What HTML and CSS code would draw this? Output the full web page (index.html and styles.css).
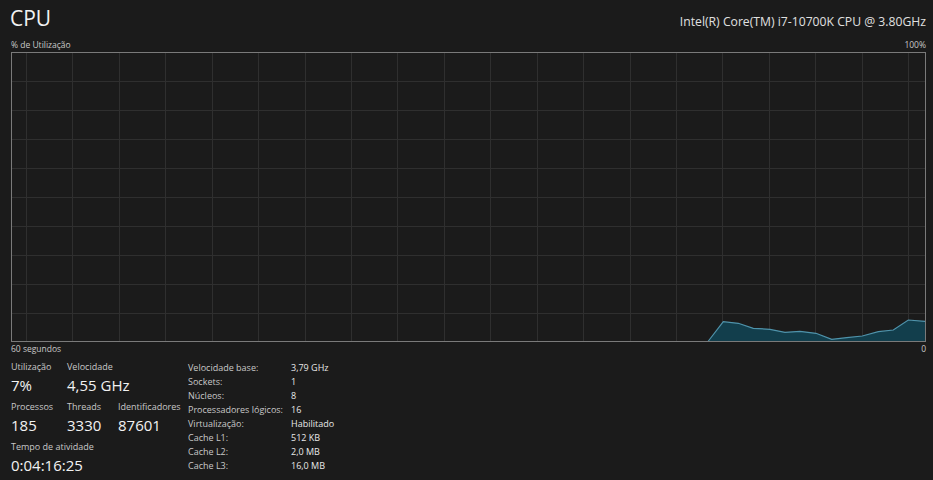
FILE: index.html
```html
<!DOCTYPE html>
<html lang="pt">
<head>
  <meta charset="UTF-8" />
  <title>CPU</title>
  <link rel="stylesheet" href="styles.css">
</head>
<body>
  <div id="cpu-panel">
    <div class="header">
      <h1>CPU</h1>
      <div class="model">Intel(R) Core(TM) i7-10700K CPU @ 3.80GHz</div>
    </div>
    <div class="axis-row top">
      <span>% de Utilização</span>
      <span>100%</span>
    </div>

    <svg class="graph" width="915" height="290" viewBox="0 0 915 290">
      <g class="grid">
        <line x1="0" y1="29.5" x2="915" y2="29.5"/>
        <line x1="0" y1="58.5" x2="915" y2="58.5"/>
        <line x1="0" y1="87.5" x2="915" y2="87.5"/>
        <line x1="0" y1="116.5" x2="915" y2="116.5"/>
        <line x1="0" y1="145.5" x2="915" y2="145.5"/>
        <line x1="0" y1="174.5" x2="915" y2="174.5"/>
        <line x1="0" y1="203.5" x2="915" y2="203.5"/>
        <line x1="0" y1="232.5" x2="915" y2="232.5"/>
        <line x1="0" y1="261.5" x2="915" y2="261.5"/>
        <line x1="15.5" y1="0" x2="15.5" y2="290"/>
        <line x1="61.5" y1="0" x2="61.5" y2="290"/>
        <line x1="108.5" y1="0" x2="108.5" y2="290"/>
        <line x1="154.5" y1="0" x2="154.5" y2="290"/>
        <line x1="201.5" y1="0" x2="201.5" y2="290"/>
        <line x1="247.5" y1="0" x2="247.5" y2="290"/>
        <line x1="294.5" y1="0" x2="294.5" y2="290"/>
        <line x1="340.5" y1="0" x2="340.5" y2="290"/>
        <line x1="386.5" y1="0" x2="386.5" y2="290"/>
        <line x1="433.5" y1="0" x2="433.5" y2="290"/>
        <line x1="479.5" y1="0" x2="479.5" y2="290"/>
        <line x1="526.5" y1="0" x2="526.5" y2="290"/>
        <line x1="572.5" y1="0" x2="572.5" y2="290"/>
        <line x1="619.5" y1="0" x2="619.5" y2="290"/>
        <line x1="665.5" y1="0" x2="665.5" y2="290"/>
        <line x1="711.5" y1="0" x2="711.5" y2="290"/>
        <line x1="758.5" y1="0" x2="758.5" y2="290"/>
        <line x1="804.5" y1="0" x2="804.5" y2="290"/>
        <line x1="851.5" y1="0" x2="851.5" y2="290"/>
        <line x1="897.5" y1="0" x2="897.5" y2="290"/>
      </g>
      <!-- ultimos 15 segundos de uso -->
      <polygon class="usage-fill" points="697,289.5 712.3,269.7 727.3,271.3 742.3,276.3 759,277.3 774,280.3 789,279.3 805,281.3 820.7,287.3 835.7,285.7 851.3,284 867.3,279.7 882.3,278 897.3,268 914,269.3 914,289.5"/>
      <polyline class="usage-line" points="697,289.5 712.3,269.7 727.3,271.3 742.3,276.3 759,277.3 774,280.3 789,279.3 805,281.3 820.7,287.3 835.7,285.7 851.3,284 867.3,279.7 882.3,278 897.3,268 914,269.3"/>
      <rect class="frame" x="0.5" y="0.5" width="914" height="289"/>
    </svg>

    <div class="axis-row bottom">
      <span>60 segundos</span>
      <span>0</span>
    </div>

    <div class="stats">
      <div class="live">
        <div class="stat-row">
          <div class="stat w56">
            <div class="label">Utilização</div>
            <div class="value">7%</div>
          </div>
          <div class="stat">
            <div class="label">Velocidade</div>
            <div class="value">4,55 GHz</div>
          </div>
        </div>
        <div class="stat-row">
          <div class="stat w56">
            <div class="label">Processos</div>
            <div class="value">185</div>
          </div>
          <div class="stat w51">
            <div class="label">Threads</div>
            <div class="value">3330</div>
          </div>
          <div class="stat">
            <div class="label">Identificadores</div>
            <div class="value">87601</div>
          </div>
        </div>
        <div class="stat-row">
          <div class="stat">
            <div class="label">Tempo de atividade</div>
            <div class="value">0:04:16:25</div>
          </div>
        </div>
      </div>

      <div class="specs">
        <span>Velocidade base:</span><span class="val">3,79 GHz</span>
        <span>Sockets:</span><span class="val">1</span>
        <span>Núcleos:</span><span class="val">8</span>
        <span>Processadores lógicos:</span><span class="val">16</span>
        <span>Virtualização:</span><span class="val">Habilitado</span>
        <span>Cache L1:</span><span class="val">512 KB</span>
        <span>Cache L2:</span><span class="val">2,0 MB</span>
        <span>Cache L3:</span><span class="val">16,0 MB</span>
      </div>
    </div>
  </div>
</body>
</html>
```

FILE: styles.css
```css
body {
  margin: 0;
  background-color: #1b1b1b;
  color: #e6e6e6;
  font-family: "Open Sans", "Noto Sans", sans-serif;
  overflow: hidden;
}

#cpu-panel {
  width: 915px;
  padding: 0 7px 0 11px;
}

.header {
  display: flex;
  justify-content: space-between;
  align-items: baseline;
  height: 38px;
}

h1 {
  margin: 0;
  font-size: 21px;
  font-weight: 400;
  line-height: 36px;
  margin-left: -1px;
  color: #f2f2f2;
}

.model {
  font-size: 12.2px;
  color: #e0e0e0;
}

.axis-row {
  display: flex;
  justify-content: space-between;
  font-size: 8.5px;
  color: #c8c8c8;
  line-height: 14px;
}

.graph {
  display: block;
}

.grid line {
  stroke: #2f2f2f;
  stroke-width: 1;
}

.frame {
  fill: none;
  stroke: #7a7a7a;
  stroke-width: 1;
}

.usage-fill {
  fill: #123e4c;
}

.usage-line {
  fill: none;
  stroke: #4f93ab;
  stroke-width: 1.2;
}

.stats {
  display: flex;
  margin-top: 4px;
}

.live {
  width: 177px;
}

.stat-row {
  display: flex;
  margin-bottom: 4px;
}

.w56 { width: 56px; }
.w51 { width: 51px; }

.label {
  font-size: 9px;
  color: #c8c8c8;
  line-height: 14px;
}

.value {
  font-size: 15px;
  color: #f2f2f2;
  line-height: 22px;
}

.specs {
  display: grid;
  grid-template-columns: 103px auto;
  grid-auto-rows: 14px;
  align-items: center;
  font-size: 9px;
  line-height: 14px;
  color: #c8c8c8;
  margin-top: 1px;
}

.specs .val {
  color: #e8e8e8;
}
```
